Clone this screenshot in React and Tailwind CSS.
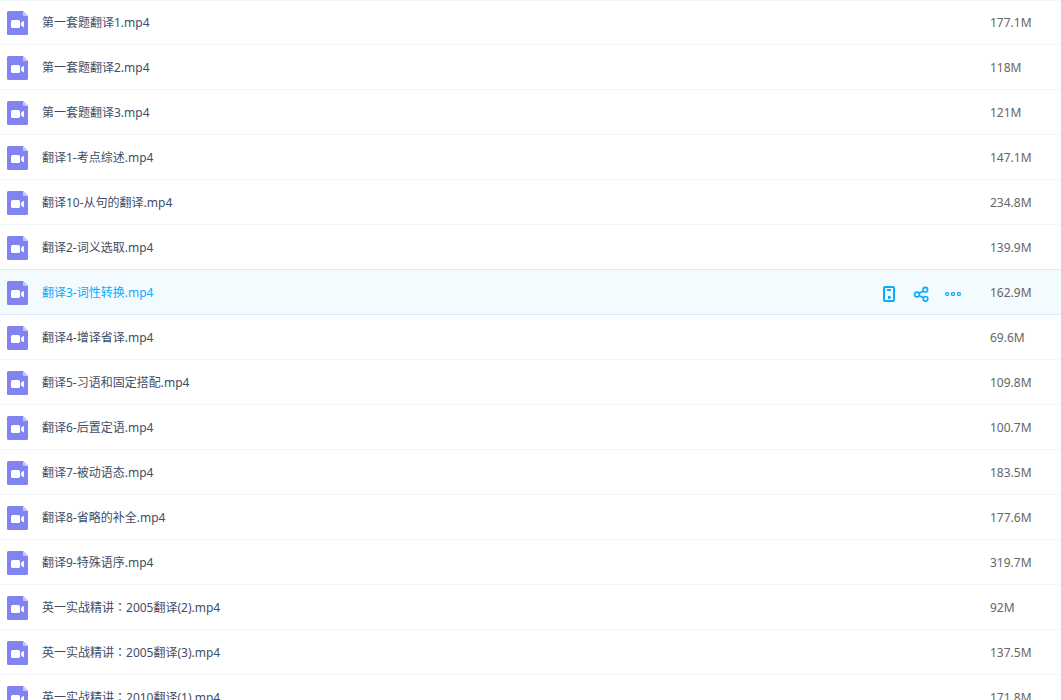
import React from "react";

const files = [
  { name: "第一套题翻译1.mp4", size: "177.1M" },
  { name: "第一套题翻译2.mp4", size: "118M" },
  { name: "第一套题翻译3.mp4", size: "121M" },
  { name: "翻译1-考点综述.mp4", size: "147.1M" },
  { name: "翻译10-从句的翻译.mp4", size: "234.8M" },
  { name: "翻译2-词义选取.mp4", size: "139.9M" },
  { name: "翻译3-词性转换.mp4", size: "162.9M", active: true },
  { name: "翻译4-增译省译.mp4", size: "69.6M" },
  { name: "翻译5-习语和固定搭配.mp4", size: "109.8M" },
  { name: "翻译6-后置定语.mp4", size: "100.7M" },
  { name: "翻译7-被动语态.mp4", size: "183.5M" },
  { name: "翻译8-省略的补全.mp4", size: "177.6M" },
  { name: "翻译9-特殊语序.mp4", size: "319.7M" },
  { name: "英一实战精讲：2005翻译(2).mp4", size: "92M" },
  { name: "英一实战精讲：2005翻译(3).mp4", size: "137.5M" },
  { name: "英一实战精讲：2010翻译(1).mp4", size: "171.8M" },
];

function VideoIcon() {
  return (
    <svg className="h-6 w-[21px] shrink-0" viewBox="0 0 21 24" aria-hidden="true">
      <path d="M1.5 0H16l5 5v17.5a1.5 1.5 0 0 1-1.5 1.5h-18A1.5 1.5 0 0 1 0 22.5v-21A1.5 1.5 0 0 1 1.5 0z" fill="#8183f1" />
      <path d="M16 0l5 5h-4a1 1 0 0 1-1-1z" fill="#c6c6f9" />
      <rect x="4" y="9" width="9" height="8" rx="1.6" fill="#fff" />
      <path d="M17 10v6.2c-.8 0-1.4-.4-2-1l-1-1v-2.2l1-1c.6-.6 1.2-1 2-1z" fill="#fff" />
    </svg>
  );
}

function PhoneIcon() {
  return (
    <svg className="size-4" viewBox="0 0 16 16" fill="none" aria-hidden="true">
      <rect x="3" y="1" width="10" height="14" rx="1" stroke="#09aaff" strokeWidth="2" />
      <path d="M6 3h4v2H6zM7 10h1v-.5L10 11v1l-2 1H7z" fill="#09aaff" />
    </svg>
  );
}

function ShareIcon() {
  return (
    <svg className="size-4" viewBox="0 0 16 16" fill="none" stroke="#09aaff" strokeWidth="1.6" aria-hidden="true">
      <circle cx="4" cy="8.5" r="2.4" />
      <circle cx="12.3" cy="3.7" r="2.3" />
      <circle cx="12.5" cy="12.8" r="2.3" />
      <path d="M6 7.500l4.300-2.500M6 9.500l4.300 2.300" />
    </svg>
  );
}

function MoreIcon() {
  return (
    <svg className="size-4" viewBox="0 0 16 16" fill="none" stroke="#09aaff" strokeWidth="1.2" aria-hidden="true">
      <rect x="0.7" y="6.6" width="2.8" height="2.8" rx="1" />
      <rect x="6.6" y="6.6" width="2.8" height="2.8" rx="0.7" />
      <rect x="12.5" y="6.6" width="2.8" height="2.8" rx="1" />
    </svg>
  );
}

// The full-width colon sits in the middle of its cell.
function FileName({ name }) {
  const [head, tail] = name.split("：");
  if (tail === undefined) return name;
  return (
    <>
      {head}
      <span className="font-['Noto_Sans_CJK_TC',sans-serif] leading-none">：</span>
      {tail}
    </>
  );
}

function FileRow({ file }) {
  const { name, size, active } = file;
  return (
    <li
      className={
        active
          ? "-mt-px flex h-[46px] items-center border-y border-[#d9eafd] bg-[#f4fbff] pt-0.5 pl-[7px]"
          : "flex h-[45px] items-center border-b border-[#f2f6fd] pt-0.5 pl-[7px] first:border-t first:pt-px"
      }
    >
      <VideoIcon />
      <div className="min-w-0 flex-1 pl-[14px]">
        <a href="#" className={active ? "block truncate text-[#09aaff]" : "block truncate text-[#424e67]"}>
          <FileName name={name} />
        </a>
      </div>
      {active && (
        <div className="mr-[29px] flex gap-4 pt-px">
          <button type="button" aria-label="下载到手机"><PhoneIcon /></button>
          <button type="button" aria-label="分享"><ShareIcon /></button>
          <button type="button" aria-label="更多"><MoreIcon /></button>
        </div>
      )}
      <span className="w-[71px] shrink-0 text-[#666666]">{size}</span>
    </li>
  );
}

export default function App() {
  return (
    <main className="h-screen overflow-hidden bg-white font-['Noto_Sans','Noto_Sans_CJK_SC',sans-serif] text-[12px] leading-[18px]">
      <ul>
        {files.map((file) => (
          <FileRow key={file.name} file={file} />
        ))}
      </ul>
    </main>
  );
}
